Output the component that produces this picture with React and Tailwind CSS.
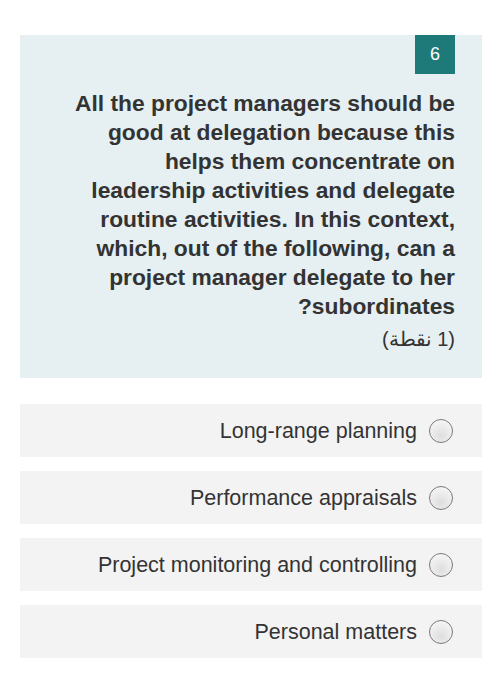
import React from "react";

const options = [
  "Long-range planning",
  "Performance appraisals",
  "Project monitoring and controlling",
  "Personal matters",
];

function Radio() {
  return (
    <span className="inline-block w-[24px] h-[24px] rounded-full border-[1.5px] border-[#7a7a7a] bg-[radial-gradient(circle_at_50%_70%,#dedede,#fbfbfb)] shrink-0" />
  );
}

export default function App() {
  return (
    <div className="w-[502px] h-[700px] bg-white pt-[35px] px-[20px]" style={{ fontFamily: '"Liberation Sans", Arial, "Noto Sans", sans-serif' }}>
      <div className="bg-[#e6eff1] h-[343px] pr-[27px] pl-[39px] flex flex-col items-end" dir="rtl">
        <div className="w-[40px] h-[39px] bg-[#1d7a78] text-white text-[18px] flex items-center justify-center self-start" dir="ltr">6</div>
        <p className="mt-[15px] text-[22.8px] leading-[29px] font-bold text-[#333333] text-right w-full" dir="rtl">
          All the project managers should be good at delegation because this helps them concentrate on leadership activities and delegate routine activities. In this context, which, out of the following, can a project manager delegate to her subordinates?
        </p>
        <p className="mt-[4px] text-[20px] leading-[28px] text-[#333333] w-full text-right" dir="rtl">(1 نقطة)</p>
      </div>
      <div className="mt-[26px] flex flex-col gap-[14px]">
        {options.map((o) => (
          <div key={o} className="h-[53px] bg-[#f3f3f3] flex items-center justify-end pr-[29px] gap-[12px]">
            <span className="text-[21.5px] text-[#333333] mt-[2px]">{o}</span>
            <Radio />
          </div>
        ))}
      </div>
    </div>
  );
}
